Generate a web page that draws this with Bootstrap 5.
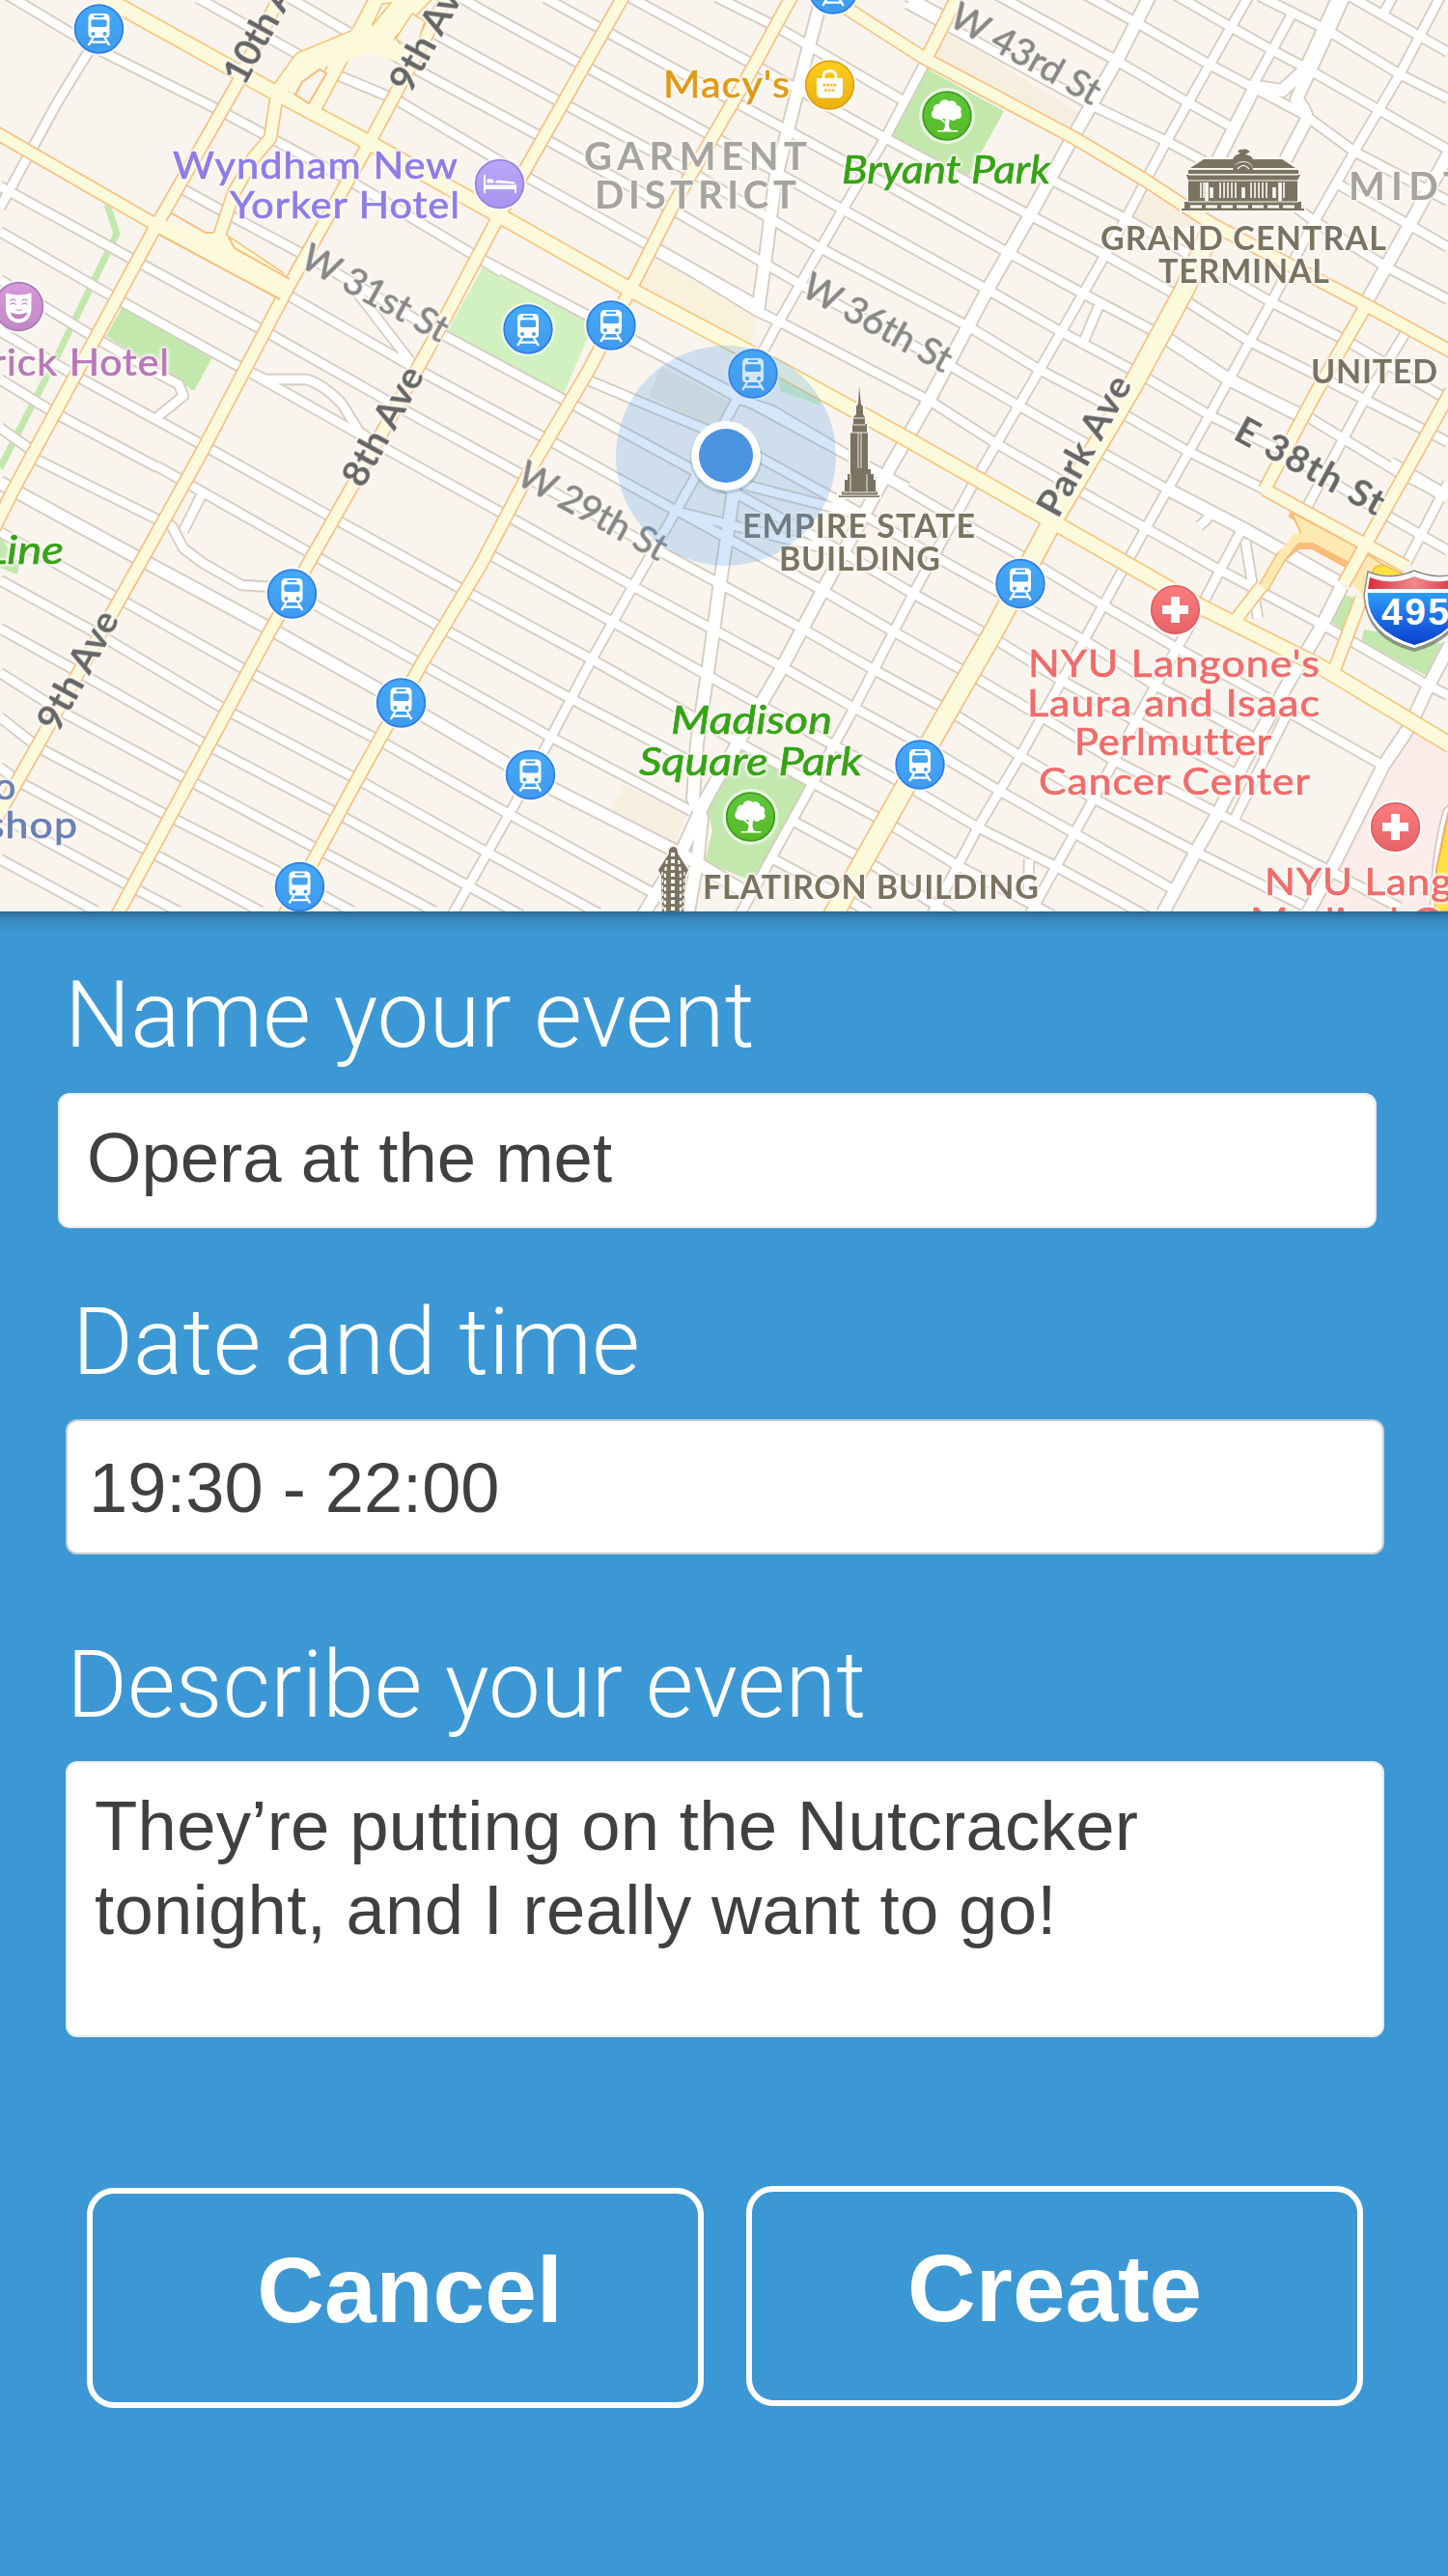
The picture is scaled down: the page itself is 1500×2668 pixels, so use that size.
<!DOCTYPE html>
<html lang="en">
<head>
<meta charset="utf-8">
<meta name="viewport" content="width=device-width, initial-scale=1">
<title>Create event</title>
<link href="https://cdn.jsdelivr.net/npm/bootstrap@5.3.0/dist/css/bootstrap.min.css" rel="stylesheet">
<style>
body{background:#3c98d4;font-family:"Liberation Sans",Arial,sans-serif;width:1500px;min-height:2668px}
.map-pane{height:944px;background:#f9f4ed}
.map-pane svg{display:block}
.form-pane{padding-top:59px;background:linear-gradient(#2b668e 0,#3685bb 7px,#3a91ca 14px,#3c98d4 24px)}
.field-label{font-family:Roboto,sans-serif;font-weight:300;font-size:96px;line-height:96px;color:#fff;margin-left:7px;letter-spacing:.12px;white-space:nowrap}
.field-box.form-control{width:1366px;height:140px;border:2px solid #e9ebee;border-radius:12px;font-size:72.5px;line-height:87px;color:#404040;background:#fff;padding:0 28px 7px;resize:none;overflow:hidden}
.row-name{margin-left:60px}.row-date{margin-left:68px;margin-top:70px}.row-desc{margin-left:68px;margin-top:87px}
.row-name .field-label{margin-bottom:33px}
.row-date .field-label{margin-bottom:32px;margin-left:7px}
.row-desc .field-label{margin-bottom:31px;margin-left:1px}
.row-date .field-box{padding:1px 22px 0;border-color:#c9cdd2;font-size:72.2px}
.row-desc .field-box{height:286px;padding:21px 28px;letter-spacing:.28px}
.actions{margin:154px 0 0 90px;gap:44px}
.action-btn.btn{width:639px;height:228px;border:6px solid #fff;border-radius:28px;color:#fff;font-weight:700;font-size:98px;line-height:1;padding:0 0 16px}
.action-btn.cancel{margin-top:2px;padding-left:30px;font-size:96.5px}
/* map cartography */
.ln{fill:none;stroke-linejoin:round}
.case-s{stroke:#d6ccc1;stroke-width:12.3}.fill-s{stroke:#fff;stroke-width:8.6}
.case-w{stroke:#d6ccc1;stroke-width:15.8}.fill-w{stroke:#fff;stroke-width:12}
.case-y{stroke:#f9c083;stroke-width:15}.fill-y{stroke:#fcfadb;stroke-width:11.6}
.case-b{stroke:#f6c77c;stroke-width:17.8}.fill-b{stroke:#fcfadb;stroke-width:14.4}
.lbl{font-family:Lato,sans-serif;stroke-width:.7px;filter:drop-shadow(0 0 1.4px #fcf9f4) drop-shadow(0 0 1.4px #fcf9f4) drop-shadow(0 0 1.4px #fcf9f4)}
.poi{font-size:39.5px}
.caps{font-size:34px;font-weight:700;fill:#7b7361}
.dist{font-size:40px;font-weight:700;fill:#a5a4a0}
.park{font-size:40px;font-style:italic;fill:#36a316;stroke:#36a316}
.ave{font-size:39px;font-weight:700;fill:#666}
.strt{font-size:38.5px;fill:#868686;stroke:#868686}
.violet{fill:#8d7ce8;stroke:#8d7ce8}.gold{fill:#e09b16;stroke:#e09b16}.plum{fill:#b877b9;stroke:#b877b9}.slate{fill:#6b7fb4;stroke:#6b7fb4}
.red{fill:#f06c6b;stroke:#f06c6b}
</style>
<script src="https://cdn.jsdelivr.net/npm/bootstrap@5.3.0/dist/js/bootstrap.bundle.min.js"></script>
</head>
<body>
<main class="d-flex flex-column">
<section class="map-pane overflow-hidden" aria-label="Map">
<svg width="1500" height="944" viewBox="0 0 1500 944">
<defs>
<linearGradient id="gBlue" x2="0" y2="1"><stop stop-color="#45a8f8"/><stop offset="1" stop-color="#3f9bee"/></linearGradient>
<linearGradient id="gGreen" x2="0" y2="1"><stop stop-color="#5dc73a"/><stop offset="1" stop-color="#58bb28"/></linearGradient>
<linearGradient id="gGold" x2="0" y2="1"><stop stop-color="#fdce1c"/><stop offset="1" stop-color="#eab011"/></linearGradient>
<linearGradient id="gViolet" x2="0" y2="1"><stop stop-color="#bba7fa"/><stop offset="1" stop-color="#a795ee"/></linearGradient>
<linearGradient id="gPlum" x2="0" y2="1"><stop stop-color="#d79adb"/><stop offset="1" stop-color="#c187c4"/></linearGradient>
<linearGradient id="gRed" x2="0" y2="1"><stop stop-color="#fb7c7f"/><stop offset="1" stop-color="#e66468"/></linearGradient>
<linearGradient id="gShield" x2="0" y2="1"><stop stop-color="#2c9df4"/><stop offset=".45" stop-color="#1f6fe6"/><stop offset="1" stop-color="#0c3fd0"/></linearGradient>
<linearGradient id="gTop" x2="1" y2="0"><stop stop-color="#d92b3c"/><stop offset=".5" stop-color="#ee8a8c"/><stop offset="1" stop-color="#d92b3c"/></linearGradient>
<symbol id="train" viewBox="-28 -28 56 56" overflow="visible">
<circle r="28" fill="#fff" opacity=".65"/><circle r="24.8" fill="url(#gBlue)" stroke="#2f7ee6" stroke-width="1.8"/>
<path fill="#fff" fill-rule="evenodd" d="M-7.500-16H7.500Q11-15 11-11V5Q11 9 7 9H-7Q-11 9-11 5V-11Q-11-15-7.500-16ZM-5-14.200V-12H5V-14.200ZM-6-9.800Q-8.200-9.800-8.200-7.500V-3.800Q-8.200-2-6-2H6Q8.200-2 8.200-3.800V-7.500Q8.200-9.800 6-9.800ZM-6 3A2 2 0 1 0-6 7A2 2 0 1 0-6 3ZM6 3A2 2 0 1 0 6 7A2 2 0 1 0 6 3Z"/>
<path stroke="#fff" stroke-width="2.400" fill="none" d="M-6 9L-10.800 17M6 9L10.800 17M-8.500 13.600H8.500"/>
</symbol>
<symbol id="tree" viewBox="-28 -28 56 56" overflow="visible">
<circle r="29" fill="#fff" opacity=".6"/><circle r="24.8" fill="url(#gGreen)" stroke="#419c22" stroke-width="1.8"/>
<path fill="#fff" d="M-12 3C-17 2-17-4-14-6C-15-10-11-13-8-12C-7-17-1-18 2-15C6-17 10-14 10-11C14-11 16-7 14-4C17 0 14 4 10 3C8 6 4 5 3 3L2 8C2 12 3 14 5 15H11V16.600H-10V15H-4C-2 13-2 10-2.200 8L-7 4ZM-5 3L-2 6V3Z"/>
</symbol>
<symbol id="cross" viewBox="-28 -28 56 56" overflow="visible">
<circle r="28" fill="#fff" opacity=".65"/><circle r="24.800" fill="url(#gRed)" stroke="#d95c60" stroke-width="1.500"/>
<path fill="#fff" d="M-4.500-13.500H4.500V-4.500H13.500V4.500H4.500V13.500H-4.500V4.500H-13.500V-4.500H-4.500Z"/>
</symbol>
<!-- cross-town streets -->
<path id="side" d="M0-10L103 52L227 114L362 187L494 266L632 339L656 352
M184 193L242 225M242 225L319 266L452 343L588 416L724 490L896 534M724 490L764 511
M632 339L770 415L800 425L918 495L989 537L1069 582L1143 627L1217 670L1313 723
M205-2L310 57M300-2L362 34M350 78L410 103L545 183L677 257
M395-5L433 73M405 55L433 73L500 109L563 143L698 218L830 295L983 378L1055 420L1135 465L1210 507L1287 547
M395 4L460 40L500 62L583 107L719 180L850 257L1003 338L1077 383L1157 425L1230 467L1310 507
M470-7L500 11L603 67L740 142L873 217L1023 300L1098 343L1180 387L1253 430L1333 470L1430 530L1500 570
M565-2L623 30L760 105L895 178L1045 262L1120 303L1203 347L1273 393L1352 430L1450 490L1500 515
M643-8L781 67L917 143L1067 223L1143 263L1223 308L1293 353L1373 393L1475 445L1500 458
M742-3L803 27L937 105M1087 185L1167 227L1243 270L1317 313L1395 353L1493 410L1500 414
M940-4L975 15M1133 110L1210 147L1247 167M940 4L1133 110
M1028-8L1157 63L1232 107L1273 130M1120-8L1180 25L1253 67L1297 90L1350 118L1403 157L1500 208
M1213-8L1275 28L1318 52L1352 70L1427 113L1500 155M1305-4L1373 30L1450 77L1500 102M1398-4L1470 37L1500 54
M1340 213L1363 230L1437 277L1500 310M1385 190L1460 233L1500 256
M807 333L963 415L1033 460L1112 505L1187 547L1263 590L1370 647L1480 710L1500 720M677 257L785 323L807 333
M653 352L746 400L940 505
M494 266L520 282M360 290L431 382L567 455L702 530L875 573M600 390L746 451L896 534L968 576L1047 620L1123 663L1197 710L1297 763
M297 305L431 382M700 528L853 612L925 654L1004 698L1080 743L1153 787L1263 843L1383 905L1450 940
M724 490L875 573L946 615L1026 659L1100 705L1177 747L1283 803
M0 193L142 271L276 344L410 420L545 494L680 569L831 651L904 693L983 736L1057 783L1133 827L1240 883L1350 938
M0 240L120 309L254 383L389 459L523 533L659 609L809 690L883 732L962 775L1037 820L1113 863L1213 920
M0 290L99 350L160 385L185 398L190 410L163 432M78 389L212 462L346 537L480 611L613 683L765 769L840 810L919 852L993 897L1070 937L1090 948
M501 571L636 645L787 730L862 771L940 814L1013 857L1093 897L1190 950
M0 343L78 389M0 393L57 428L163 484M30 472L169 541L178 545L190 568L210 583L250 606L300 609M209 512L190 550M0 443L35 468
M163 483L325 575L457 650L592 724L718 790M304 614L437 688L570 763L716 840
M254 383L275 393H318Q335 398 354 418L372 447L389 459
M798 888L876 930L900 945M819 849L897 891L970 938L990 950
M0 551L125 621L258 696L393 767L527 843L673 923L710 945
M0 601L104 658L237 737L370 807L505 883L620 946M0 651L83 697L217 773L350 843L484 917L540 948
M0 697L62 736L197 809L330 880L450 944M0 743L41 775L176 846L310 914L365 944M0 795L20 810L155 882L270 944
M0 845L133 917L185 944M0 890L100 944M1330 735L1433 793M1500 720L1480 710
M1242 545L1247 541L1257 530M1120 360L1139 315M1065 935L1066 890"/>
<!-- minor avenues -->
<path id="minor" d="M92 53L60 105L0 215M957 67L917 143L873 217L807 333L753 433L717 500L657 605L613 683L549 805L505 883L467 950
M1297-10L1253 67L1208 147L1167 225L1077 383L1010 498L946 615L883 737L800 887L765 950
M1498-15L1450 77L1403 157L1363 227L1317 313L1253 430L1187 547L1123 663L1057 783L1013 857L964 950
M1287 547L1247 623L1197 710L1133 827L1065 950M1337 17L1297 90M1457 343L1410 420L1353 527M1445-8L1434 13
M1303 640L1290 560M1333 740L1278 850M1500 500L1457 583"/>
<!-- broad avenues -->
<path id="wide" d="M862-60L848 10L833 67L803 187L793 267L785 323
M1195-12L1160 57L1107 150L1067 223L1023 300L963 413L913 500L853 610L807 697L760 777L730 830L707 880L665 950
M765 440L760 507L753 557L745 610L733 697L722 770L718 827L727 847L723 887L712 950
M0 500L147 580L283 653L415 727L549 805L707 885L777 927M677 257L785 318
M1300 90L1262 165M1390-10L1352 72L1328 94L1302 90M1395-10L1357 73L1343 103Q1352 112 1354 123L1332 165
M1503 155L1460 233L1417 310M1390 607L1370 647L1333 710L1290 787L1263 840L1240 880L1205 945
M1502 668L1480 710L1460 753L1433 793L1383 893L1355 945M1210 507L1287 547L1390 605M1203 347L1273 393L1350 432M1440 480L1500 515"/>
<path id="yel" d="M300-25L245 88L160 237L14 507L-10 555M480-35L383 147L297 300L208 470L147 580L-5 850
M655-20L515 227L450 350L367 500L280 653L120 950M830-22L780 70L697 213L653 300L610 383L553 480L497 587L437 687L367 813L293 950
M870 4L957 60L1113 143L1187 187L1257 233L1417 317L1503 364M1000-20L960 60M1413 320L1363 407L1310 507
M1503 405L1467 470L1413 567L1392 605M1310 507L1457 587M1307 607L1280 642M1410 620L1380 700M-5 137L160 232L297 303
M287 97L280 143L263 163L242 200L227 245L250 270"/>
<path id="big" d="M105-4L287 97L383 148L515 222L653 300L780 367L940 455L1090 540L1247 630L1367 690L1503 772
M287 97L312 62L370 38L395-10M395 42L445-10M358 50L322 118M230 250L290 290"/>
<path id="parkave" d="M1257 233L1227 300L1173 400L1090 540L1030 653L967 763L897 887L862 950"/>
</defs>
<rect width="1500" height="944" fill="#f9f4ed"/>
<!-- land use -->
<g fill="#c2e8ae">
<path d="M127 317L220 370L201 405L110 348ZM958 70L1040 115L1003 183L923 140ZM767 775L837 813L783 914L730 893L738 860L733 840Z"/>
<path d="M1392 616L1412 622L1395 655L1377 643ZM1413 652L1497 667L1480 701L1410 665ZM0 556L20 583L18 595L0 588Z"/>
</g>
<path d="M500 277L615 335L583 410L463 343ZM805 375L845 402L850 420L808 405Z" fill="#d2f1c1"/>
<path d="M680 270L783 327L778 360L663 297Z" fill="#faf1dc"/>
<path d="M983 33L1117 117L1107 135L967 60ZM1190 200L1247 230L1215 240L1167 227ZM647 813L710 843L700 875L632 840Z" fill="#f6eedf"/>
<path d="M685 380L758 417L742 444L672 410Z" fill="#efe9dc"/>
<path d="M1463 757L1503 778V850L1475 944H1360Z" fill="#fbecea"/>
<path d="M111 212L121 242L60 367L0 485" fill="none" stroke="#c2e8ae" stroke-width="7"/>
<!-- street casings, then fills -->
<g class="ln"><use href="#side" class="case-s"/><use href="#minor" class="case-s"/><use href="#wide" class="case-w"/><use href="#side" class="fill-s"/><use href="#minor" class="fill-s"/><use href="#wide" class="fill-w"/></g>
<path d="M1337 530L1407 567L1397 583L1360 563H1343L1327 577L1308 610" fill="none" stroke="#f8bd78" stroke-width="12" stroke-linejoin="round"/>
<path d="M1337 530L1407 567L1440 590L1430 600L1397 583L1360 563H1343L1347 550Z" fill="#ffe9b2" stroke="#f8bd78" stroke-width="2"/>
<path d="M1355 557H1343L1327 577L1308 610" fill="none" stroke="#ffe9b2" stroke-width="9"/>
<path d="M1397 600L1412 585L1440 625L1412 618Z" fill="#ffe9b2"/>
<g class="ln"><use href="#yel" class="case-y"/><use href="#big" class="case-b"/><use href="#parkave" stroke="#f9c083" stroke-width="22.500"/><use href="#yel" class="fill-y"/><use href="#big" class="fill-b"/><use href="#parkave" stroke="#fcfadb" stroke-width="19"/></g>
<path d="M158 225L220 242H232L238 250L244 257L300 289L290 309L165 243Z" fill="#fcfadb"/>
<path d="M220 241H213L178 221M237 246L243 257L300 289M165 243L290 310" fill="none" stroke="#f8bd78" stroke-width="2"/>
<path d="M290 85L312 60L360 37L393-5H443L410 35L407 42L440 60L412 64L382 54L362 62L350 70L335 68L311 82L303 98Z" fill="#fcfadb"/>
<path d="M306 98L313 85L331 72L338 76L320 107Z" fill="#f9f4ed" stroke="#f8bd78" stroke-width="2"/>
<path d="M385 27L396 4L405 3ZM410 40L427 14L440 22L430 55Z" fill="#f9f4ed" stroke="#f6c370" stroke-width="1.500"/>
<path d="M1503 835L1498 840Q1486 880 1484 944" fill="none" stroke="#cfc3b8" stroke-width="7"/><path d="M1503 835L1498 840Q1486 880 1484 944" fill="none" stroke="#fff" stroke-width="4"/>
<path d="M1503 830L1488 900L1486 944H1503Z" fill="#ffe141" stroke="#f5ac65" stroke-width="2"/>
<path d="M1422 592Q1424 584 1436 586L1458 597L1452 600H1424Z" fill="#ffe141" stroke="#f5b94f" stroke-width="1.500"/>
<!-- place names -->
<g class="lbl poi">
<g class="violet"><text x="179" y="185" textLength="296" lengthAdjust="spacingAndGlyphs" letter-spacing="1">Wyndham New</text><text x="238" y="226" textLength="239" lengthAdjust="spacingAndGlyphs" letter-spacing="1">Yorker Hotel</text></g>
<text x="687" y="101" textLength="132" lengthAdjust="spacingAndGlyphs" letter-spacing="1" class="gold">Macy's</text>
<text x="-9" y="389" textLength="185" lengthAdjust="spacingAndGlyphs" letter-spacing="1" class="plum">rick Hotel</text>
<g class="slate"><text x="-6" y="828">o</text><text x="-14" y="868" textLength="95" lengthAdjust="spacingAndGlyphs" letter-spacing="1">shop</text></g>
<g class="red" letter-spacing="1"><text x="1065" y="701" textLength="303" lengthAdjust="spacingAndGlyphs">NYU Langone's</text><text x="1064" y="742" textLength="304" lengthAdjust="spacingAndGlyphs">Laura and Isaac</text><text x="1113" y="782" textLength="205" lengthAdjust="spacingAndGlyphs">Perlmutter</text><text x="1076" y="823" textLength="282" lengthAdjust="spacingAndGlyphs">Cancer Center</text><text x="1310" y="927" textLength="195" lengthAdjust="spacingAndGlyphs">NYU Lang</text><text x="1295" y="968" textLength="220" lengthAdjust="spacingAndGlyphs">Medical Ce</text></g>
</g>
<g class="lbl dist"><text x="605" y="176" textLength="231">GARMENT</text><text x="616" y="216" textLength="209">DISTRICT</text><text x="1397" y="207" textLength="122">MIDT</text></g>
<g class="lbl park"><text x="872" y="190" textLength="216" lengthAdjust="spacingAndGlyphs">Bryant Park</text><text x="695" y="760" textLength="167" lengthAdjust="spacingAndGlyphs">Madison</text><text x="662" y="803" textLength="231" lengthAdjust="spacingAndGlyphs">Square Park</text><text x="-15" y="584" textLength="81" lengthAdjust="spacingAndGlyphs">Line</text></g>
<g class="lbl caps"><text x="1140" y="259" textLength="296">GRAND CENTRAL</text><text x="1200" y="293" textLength="177">TERMINAL</text><text x="1358" y="397" textLength="131">UNITED</text><text x="769" y="557" textLength="241">EMPIRE STATE</text><text x="807" y="591" textLength="167">BUILDING</text><text x="728" y="931" textLength="348">FLATIRON BUILDING</text></g>
<g class="lbl ave">
<text transform="translate(253 90) rotate(-61.500)" textLength="150">10th Ave</text>
<text transform="translate(425 98) rotate(-61.500)" textLength="134">9th Ave</text>
<text transform="translate(376 507) rotate(-61.500)" textLength="135">8th Ave</text>
<text transform="translate(60 760) rotate(-61.500)" textLength="135">9th Ave</text>
<text transform="translate(1096 538) rotate(-61)" textLength="160">Park Ave</text>
<text transform="translate(1276 454) rotate(28.500)" textLength="170">E 38th St</text>
</g>
<g class="lbl strt">
<text transform="translate(309 275) rotate(28.800)" textLength="167">W 31st St</text>
<text transform="translate(533 500) rotate(28.800)" textLength="170">W 29th St</text>
<text transform="translate(828 305) rotate(28.800)" textLength="170">W 36th St</text>
<text transform="translate(981 25) rotate(29.500)" textLength="172">W 43rd St</text>
</g>
<!-- pins -->
<g>
<use href="#train" x="74.500" y="2" width="56" height="56"/><use href="#train" x="519" y="313" width="56" height="56"/><use href="#train" x="605" y="309" width="56" height="56"/><use href="#train" x="752" y="359" width="56" height="56"/><use href="#train" x="274.500" y="587" width="56" height="56"/><use href="#train" x="387.500" y="700" width="56" height="56"/><use href="#train" x="521.500" y="774.500" width="56" height="56"/><use href="#train" x="282.500" y="890.500" width="56" height="56"/><use href="#train" x="1029" y="576.500" width="56" height="56"/><use href="#train" x="925" y="764" width="56" height="56"/><use href="#train" x="835" y="-39" width="56" height="56"/>
<use href="#tree" x="953" y="92" width="56" height="56"/><use href="#tree" x="749.500" y="818" width="56" height="56"/>
<use href="#cross" x="1189.500" y="603.500" width="56" height="56"/><use href="#cross" x="1417.500" y="828.500" width="56" height="56"/>
<g transform="translate(859.500 88)"><circle r="28" fill="#fff" opacity=".65"/><circle r="24.800" fill="url(#gGold)" stroke="#e3a014" stroke-width="1.800"/><path d="M-6.500-6V-9Q-6.500-14.500 0-14.500T6.500-9V-6" fill="none" stroke="#fff" stroke-width="2.800"/><path d="M-13.500-7H13.500V8Q13.500 13.500 8 13.500H-8Q-13.500 13.500-13.500 8Z" fill="#fff"/><path d="M-7 0H7.500M-5.500 5.500H6" stroke="#f4bd30" stroke-width="2.500" stroke-dasharray="2.700 1"/></g>
<g transform="translate(517.500 190.500)"><circle r="28" fill="#fff" opacity=".65"/><circle r="24.800" fill="url(#gViolet)" stroke="#9683df" stroke-width="1.800"/><path d="M-16.500-9.500H-14.500V1H17.500V9.500H15.500V5.500H-14.500V9.500H-16.500Z" fill="#fff"/><path d="M-13-1V-4Q-12-6-9-5L-6-4V-1ZM-4-1Q-5-4-1-4L15-2L17 0Z" fill="#fff"/></g>
<g transform="translate(19.500 317.500)"><circle r="28" fill="#fff" opacity=".65"/><circle r="24.800" fill="url(#gPlum)" stroke="#b17bb5" stroke-width="1.800"/><path d="M-13.500-14Q0-10 13-14V3Q12 16 0 17Q-12 16-13.500 3Z" fill="#fff"/><path d="M-9-6Q-6-9-3-6M3-6Q6-9 9-6M-9-2Q-6-5-3-2M3-2Q6-5 9-2M-3 3Q0 5 3 3" stroke="#d094d2" stroke-width="1.400" fill="none"/><path d="M-9 6Q0 10 9 6Q7 12.500 0 13Q-7 12.500-9 6Z" fill="#c27fc4"/></g>
</g>
<!-- landmarks -->
<g fill="#7b7361" stroke="#f9f6ef" stroke-width="4" paint-order="stroke">
<path d="M1233 174L1247 165H1277Q1279 160 1285 159L1282 157Q1284 154 1288 155Q1290 153 1295 157L1290 160Q1297 161 1298 165H1328L1342 174H1298Q1296 167 1288 167T1278 174ZM1231 176H1277Q1279 168 1288 168T1298 176H1345V180H1231ZM1229 181H1347L1344 187V209H1348V216H1351V218H1224V216H1227V209H1231V187Z"/>
<path d="M890 400L892 419L894 421V429L896 432V439H898V448H899V486H902V491H905V497H907V509H909V513H911V515H869V513H872V509H875V497H878V491H881V486H881V448H883V439H884V432L887 429V421L889 418Z"/>
<path d="M693 884Q692 878 697 877T702 884L713 901L710 907L708 946H686L685 907L682 901Z"/>
</g>
<g stroke="#fdfcf6" fill="none">
<path stroke-width="1.200" d="M1231 181H1345M1230 187H1346M1231 209H1345M1282 175Q1288 168 1294 175"/>
<path stroke-width="3.600" d="M1250 208V189M1255 205V194M1288 205V194M1320 205V194M1326 208V189"/>
<path stroke-width="1.600" d="M1244 205V189M1247 205V189M1264 205V189M1268 205V189M1272 205V189M1276 205V189M1280 205V189M1296 205V189M1300 205V189M1304 205V189M1308 205V189M1312 205V189M1330 205V189"/>
<path stroke-width="3" stroke-dasharray="12 4" d="M1233 214H1344"/>
<path stroke-width=".9" d="M884 433H896M883 440H897M881 448H899M889 448V485M892 448V485M881 491V509M898 491V509M873 510H908M870 513H910"/>
<path stroke-width="4" stroke-dasharray="4 3" d="M697 883V945"/>
<path stroke-width="2.200" stroke-dasharray="4 3" d="M691 891L689 904V945M703 891L705 904V945"/>
<path stroke-width="1.300" stroke-dasharray="4 3" d="M686 903L687 945M709 903L707 945"/>
</g>
<!-- interstate shield -->
<g>
<path d="M1417 594Q1440 604 1465 593Q1492 604 1512 594L1518 620Q1514 662 1465 675Q1415 662 1413 618Z" fill="#555" opacity=".55"/>
<path d="M1417 592Q1440 602 1465 591Q1492 602 1512 592L1518 618Q1514 658 1465 672Q1415 658 1413 616Z" fill="#fff" stroke="#8d8d8d" stroke-width="1.500"/>
<path d="M1419 598Q1442 607 1465 597Q1490 607 1510 598L1512 610H1417Z" fill="url(#gTop)"/>
<path d="M1417 614H1514Q1515 655 1465 668Q1415 652 1417 614Z" fill="url(#gShield)"/>
<text x="1431" y="647" textLength="70" font-family="Liberation Sans, sans-serif" font-weight="700" font-size="39" fill="#fff">495</text>
</g>
<!-- current location -->
<circle cx="752" cy="472" r="114" fill="#4d9bea" opacity=".24"/>
<circle cx="752" cy="474" r="37.500" fill="#34506b" opacity=".18"/><circle cx="752" cy="472" r="36" fill="#fff"/><circle cx="752" cy="472" r="28" fill="#4a94e1"/>
</svg>
</section>
<form class="form-pane">
<div class="row-name"><label class="field-label d-block" for="evName">Name your event</label><input id="evName" class="form-control field-box" type="text" value="Opera at the met"></div>
<div class="row-date"><label class="field-label d-block" for="evTime">Date and time</label><input id="evTime" class="form-control field-box" type="text" value="19:30 - 22:00"></div>
<div class="row-desc"><label class="field-label d-block" for="evDesc">Describe your event</label><textarea id="evDesc" class="form-control field-box">They’re putting on the Nutcracker
tonight, and I really want to go!</textarea></div>
<div class="actions d-flex align-items-start"><button type="button" class="btn action-btn cancel">Cancel</button><button type="button" class="btn action-btn">Create</button></div>
</form>
</main>
</body>
</html>
